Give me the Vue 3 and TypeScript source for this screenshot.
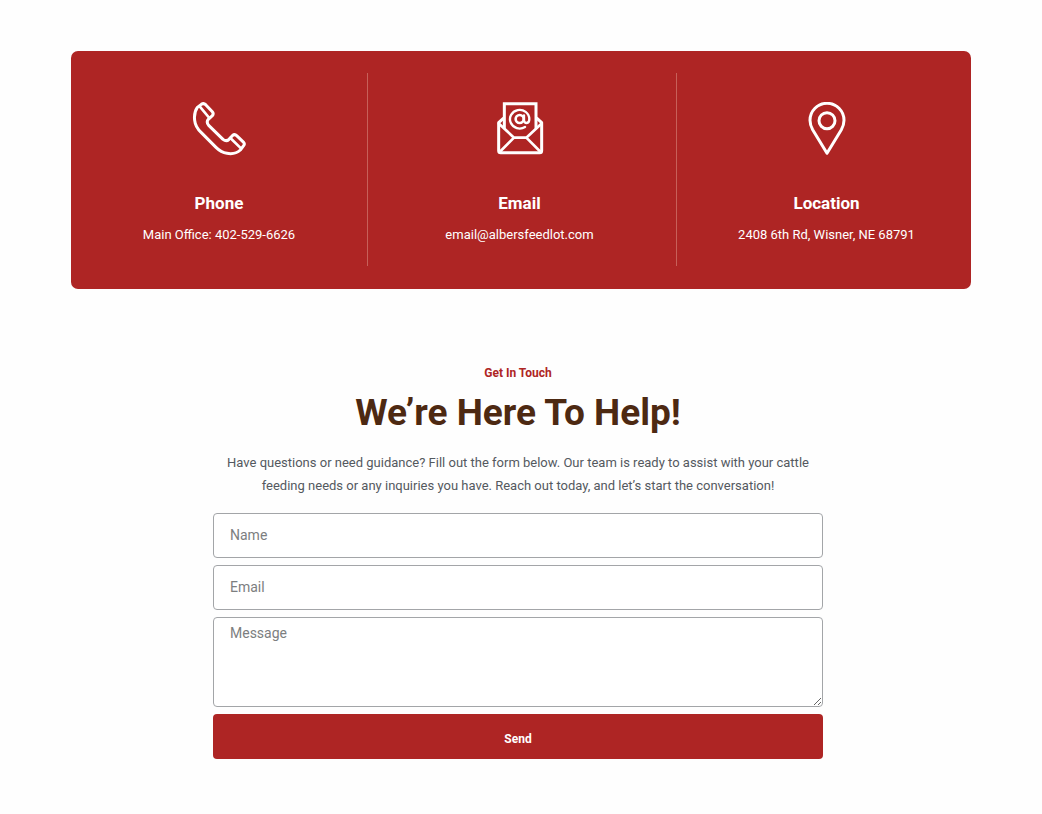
<script setup lang="ts">
import { ref } from 'vue'

const name = ref('')
const email = ref('')
const message = ref('')
</script>

<template>
  <main class="page">
    <section class="contact-card" aria-label="Contact details">
      <article class="contact phone">
        <svg class="icon" viewBox="38 36 162 162" aria-hidden="true">
          <g fill="none" stroke="currentColor" stroke-width="9" stroke-linejoin="round" stroke-linecap="round">
            <path d="M54 52 L66 43 Q73 38 79 44 L99 65 Q104 71 99 77 L87 88 Q80 96 88 106 L131 148 Q141 156 149 148 L159 137 Q166 131 172 137 L193 157 Q197 162 193 167 L183 180 Q168 194 143 190 Q125 187 110 172 L66 128 Q48 111 46 91 Q43 68 54 52 Z" />
            <path d="M61 49 L90 84" stroke-width="8" />
            <path d="M153 144 L185 175" stroke-width="8" />
          </g>
        </svg>
        <h2>Phone</h2>
        <p>Main Office: 402-529-6626</p>
      </article>
      <article class="contact email">
        <svg class="icon" viewBox="31 36 162 162" aria-hidden="true">
          <g fill="none" stroke="currentColor" stroke-width="9" stroke-linejoin="round" stroke-linecap="round">
            <path d="M65 113 V41 H160 V113" stroke-linejoin="miter" />
            <path d="M62 85 L48 98 V182 Q48 188 54 188 H171 Q177 188 177 182 V98 L163 85" />
            <path d="M49 101 L94 143 H131 L176 101 M94 143 L51 186 M131 143 L174 186" stroke-width="8" />
            <circle cx="111" cy="87" r="12" stroke-width="8" />
            <path d="M124 76 V91 Q125 99 132 99 Q140 98 140 87 A29 28 0 1 0 127 111" stroke-width="7" />
          </g>
        </svg>
        <h2>Email</h2>
        <p>email@albersfeedlot.com</p>
      </article>
      <article class="contact location">
        <svg class="icon" viewBox="27 36 162 162" aria-hidden="true">
          <g fill="none" stroke="currentColor" stroke-width="9" stroke-linejoin="round">
            <path d="M108 190 L65 119 Q57 105 57 91 A51 51 0 0 1 159 91 Q159 105 151 119 Z" />
            <circle cx="108" cy="92" r="24" />
          </g>
        </svg>
        <h2>Location</h2>
        <p>2408 6th Rd, Wisner, NE 68791</p>
      </article>
    </section>

    <section class="help">
      <p class="eyebrow">Get In Touch</p>
      <h1>We’re Here To Help!</h1>
      <p class="intro">
        Have questions or need guidance? Fill out the form below. Our team is ready to assist with your cattle
        feeding needs or any inquiries you have. Reach out today, and let’s start the conversation!
      </p>
      <form class="form" @submit.prevent>
        <input v-model="name" type="text" placeholder="Name" aria-label="Name" />
        <input v-model="email" type="email" placeholder="Email" aria-label="Email" />
        <textarea v-model="message" placeholder="Message" aria-label="Message" rows="4"></textarea>
        <button type="submit">Send</button>
      </form>
    </section>
  </main>
</template>

<style>
body {
  margin: 0;
  background: #fefefe;
}
</style>

<style scoped>
.page {
  padding: 51px 71px 48px;
  font-family: Roboto, "Liberation Sans", sans-serif;
}
.contact-card {
  display: grid;
  grid-template-columns: 296fr 309fr 295fr;
  padding: 22px 0 23px;
  border-radius: 7px;
  background: #ae2524;
  color: #fff;
}
.contact {
  display: flex;
  flex-direction: column;
  align-items: center;
  padding: 29px 0 20px;
  text-align: center;
}
.contact + .contact {
  border-left: 1px solid #c76059;
}
.email {
  padding-right: 5px;
}
.location {
  padding-left: 5px;
}
.icon {
  width: 54px;
  height: 54px;
}
h2 {
  margin: 35px 0 9px;
  font-size: 17px;
  line-height: 24px;
  font-weight: 700;
}
.contact p {
  margin: 0;
  font-size: 13px;
  line-height: 22px;
}
.help {
  display: flex;
  flex-direction: column;
  align-items: center;
  padding: 74px 6px 0 0;
  text-align: center;
}
.eyebrow {
  margin: 0;
  color: #ae2524;
  font-size: 12px;
  line-height: 20px;
  font-weight: 700;
}
h1 {
  margin: 6px 0 14px;
  color: #4d2912;
  font-size: 37px;
  line-height: 48px;
  font-weight: 700;
}
.intro {
  max-width: 610px;
  margin: 0 0 16px;
  color: #54595f;
  font-size: 13px;
  line-height: 23px;
}
.form {
  display: grid;
  gap: 7px;
  width: 100%;
  max-width: 610px;
}
input,
textarea {
  box-sizing: border-box;
  width: 100%;
  padding: 0 16px 2px;
  border: 1px solid #a3a5a8;
  border-radius: 4px;
  background: #fff;
  color: #54595f;
  font: 400 14px/20px Roboto, sans-serif;
}
input {
  height: 45px;
}
textarea {
  display: block;
  height: 90px;
  padding: 5px 16px;
  resize: vertical;
}
::placeholder {
  color: #7c7e80;
  opacity: 1;
}
button {
  height: 45px;
  padding: 4px 16px 0;
  border: 0;
  border-radius: 4px;
  background: #ae2524;
  color: #fff;
  font: 700 12px/20px Roboto, sans-serif;
}
</style>
